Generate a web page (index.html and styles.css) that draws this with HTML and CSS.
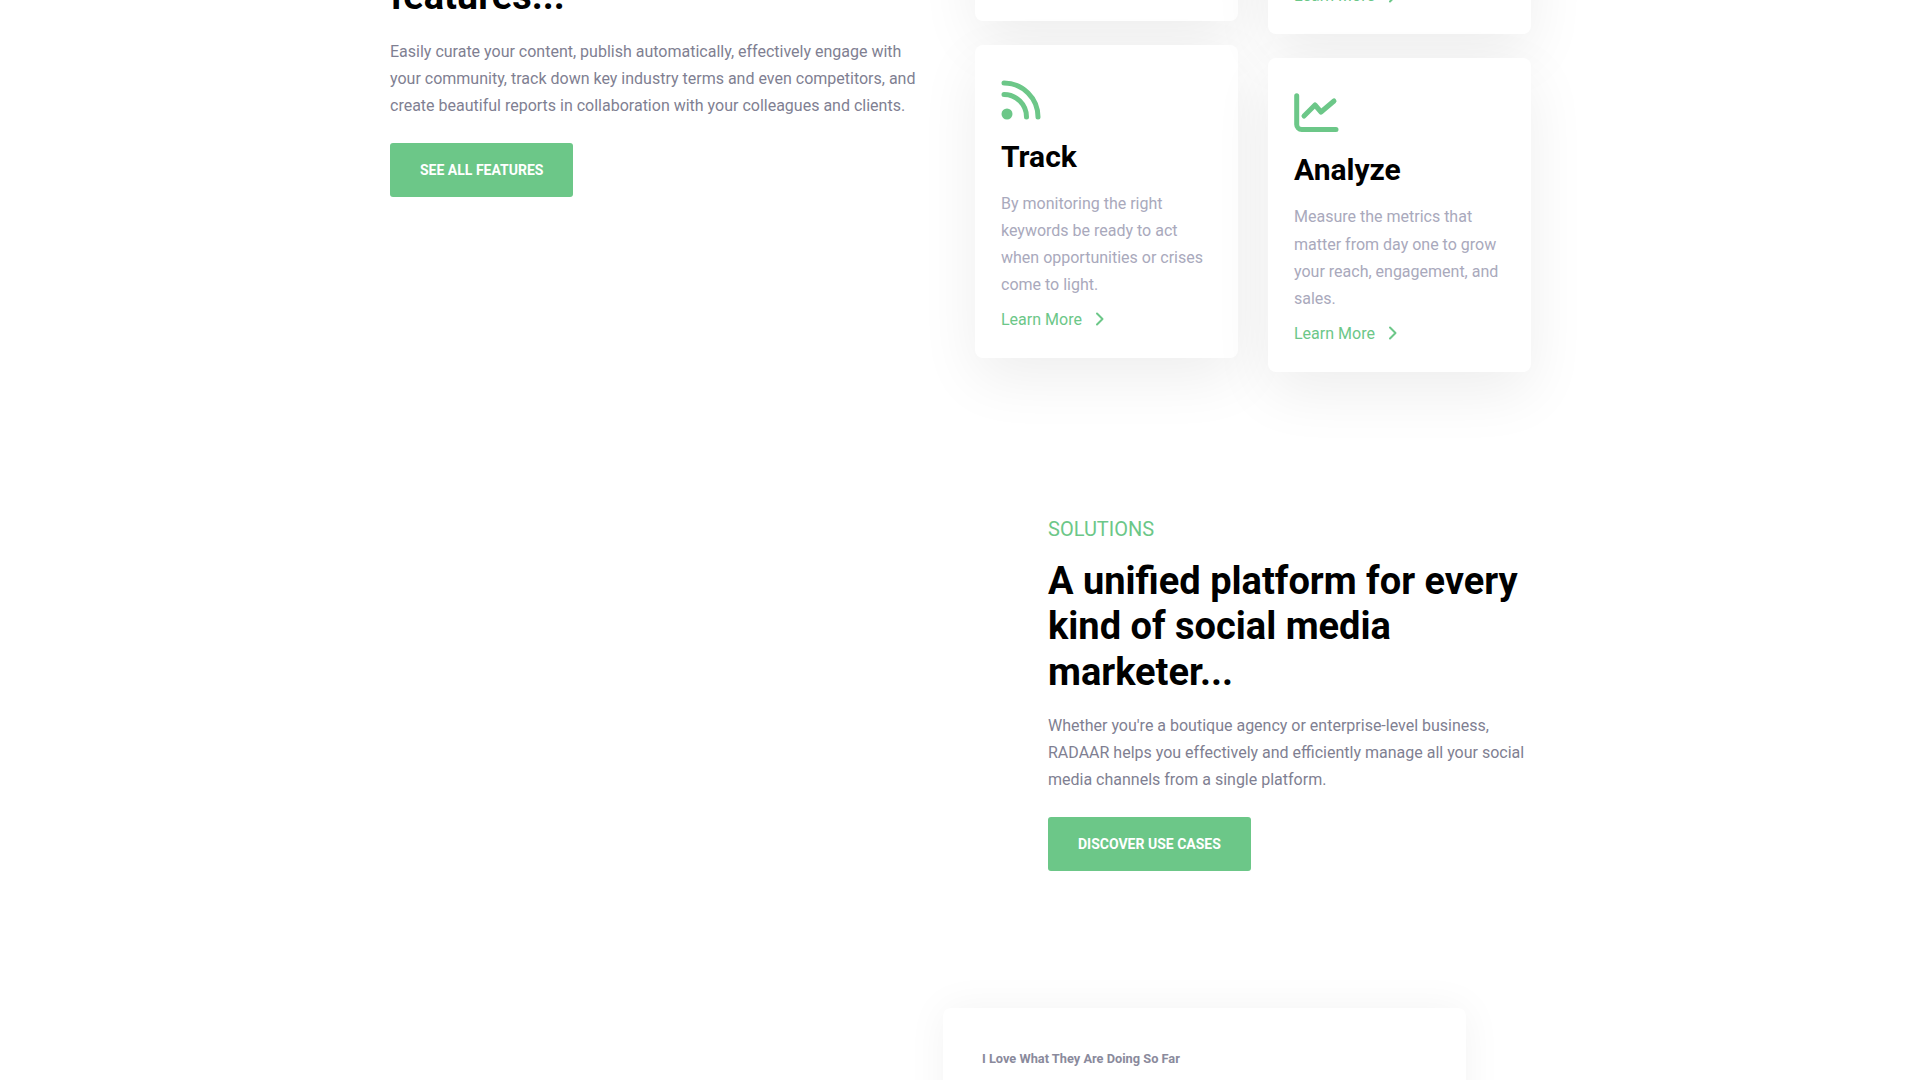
FILE: index.html
```html
<!DOCTYPE html>
<html lang="en">
<head>
    <meta charset="UTF-8">
    <meta name="viewport" content="width=device-width, initial-scale=1.0">
    <title>RADAAR</title>
    <link rel="stylesheet" href="styles.css">
</head>
<body>
    <div class="page">
        <section class="features">
            <div class="features-text">
                <h2>features...</h2>
                <p class="lead">Easily curate your content, publish automatically, effectively engage with your community, track down key industry terms and even competitors, and create beautiful reports in collaboration with your colleagues and clients.</p>
                <a class="btn" href="#">SEE ALL FEATURES</a>
            </div>
            <div class="card-col">
                <div class="card card-top card-top-short"></div>
                <div class="card">
                    <svg class="icon" width="40" height="40" viewBox="0 0 40 40" fill="none" stroke="#6cc788" stroke-width="5" stroke-linecap="round">
                        <path d="M3 3A34 34 0 0 1 37 37"/>
                        <path d="M3 14.5A22.5 22.5 0 0 1 25.5 37"/>
                        <circle cx="6" cy="34" r="5.5" fill="#6cc788" stroke="none"/>
                    </svg>
                    <h3>Track</h3>
                    <p>By monitoring the right keywords be ready to act when opportunities or crises come to light.</p>
                    <a class="more" href="#">Learn More
                        <svg width="10" height="14" viewBox="0 0 10 14" fill="none" stroke="#6cc788" stroke-width="2" stroke-linecap="round" stroke-linejoin="round"><path d="M2 1.5L7.5 7L2 12.5"/></svg>
                    </a>
                </div>
            </div>
            <div class="card-col">
                <div class="card card-top">
                    <a class="more" href="#">Learn More
                        <svg width="10" height="14" viewBox="0 0 10 14" fill="none" stroke="#6cc788" stroke-width="2" stroke-linecap="round" stroke-linejoin="round"><path d="M2 1.5L7.5 7L2 12.5"/></svg>
                    </a>
                </div>
                <div class="card">
                    <svg class="icon" width="46" height="40" viewBox="0 0 46 40" fill="none" stroke="#6cc788" stroke-width="5" stroke-linecap="round" stroke-linejoin="round">
                        <path d="M2.7 2.7V31.5a5 5 0 0 0 5 5H42"/>
                        <path d="M10 23L21 12L27 19L40 8"/>
                    </svg>
                    <h3>Analyze</h3>
                    <p>Measure the metrics that matter from day one to grow your reach, engagement, and sales.</p>
                    <a class="more" href="#">Learn More
                        <svg width="10" height="14" viewBox="0 0 10 14" fill="none" stroke="#6cc788" stroke-width="2" stroke-linecap="round" stroke-linejoin="round"><path d="M2 1.5L7.5 7L2 12.5"/></svg>
                    </a>
                </div>
            </div>
        </section>

        <section class="solutions">
            <span class="eyebrow">SOLUTIONS</span>
            <h2>A unified platform for every kind of social media marketer...</h2>
            <p class="lead">Whether you're a boutique agency or enterprise-level business, RADAAR helps you effectively and efficiently manage all your social media channels from a single platform.</p>
            <a class="btn" href="#">DISCOVER USE CASES</a>
        </section>

        <section class="testimonial">
            <h4>I Love What They Are Doing So Far</h4>
        </section>
    </div>
</body>
</html>
```

FILE: styles.css
```css
html, body {
    margin: 0;
    padding: 0;
    height: 1080px;
    overflow: hidden;
    background-color: #fff;
}

body {
    font-family: Roboto, "Liberation Sans", sans-serif;
    font-size: 16px;
    color: #7f7f92;
}

a {
    text-decoration: none;
}

h2 {
    margin: 0;
    color: #000;
    font-size: 38px;
    font-weight: 700;
    line-height: 1.2;
}

/* the shot is scrolled, so the top of the first section sits above the fold */
.page {
    width: 1140px;
    margin: -200px auto 0;
}

.lead {
    margin: 0;
    line-height: 27px;
}

.btn {
    display: inline-block;
    padding: 0 30px;
    background-color: #6cc788;
    color: #fff;
    border-radius: 3px;
    font-size: 14px;
    font-weight: 700;
    line-height: 54px;
}

.features {
    display: flex;
    align-items: flex-start;
}

.features-text {
    flex-shrink: 0;
    width: 535px;
    margin-top: 174px;
    margin-right: 50px;
}

.features-text .lead {
    margin-top: 18px;
    margin-bottom: 24px;
}

.card-col {
    display: flex;
    flex-direction: column;
    gap: 24px;
    width: 263px;
    flex-shrink: 0;
    margin-right: 30px;
}

.card-col:last-child {
    margin-right: 0;
}

.card {
    box-sizing: border-box;
    padding: 35px 26px 25px;
    background-color: #fff;
    border-radius: 8px;
    box-shadow: 0 20px 60px rgba(0, 0, 0, 0.07);
}

.card-top {
    height: 234.4px;
    display: flex;
    align-items: flex-end;
}

.card-top-short {
    height: 220.6px;
}

.icon {
    display: block;
}

.card h3 {
    margin: 19px 0 15px;
    color: #000;
    font-size: 30px;
    font-weight: 700;
    line-height: 36px;
}

.card p {
    margin: 0 0 7.6px;
    color: #a9a9bc;
    line-height: 1.7;
}

.more {
    display: flex;
    align-items: center;
    gap: 13px;
    color: #6cc788;
    line-height: 27px;
}

.solutions {
    width: 482px;
    margin-left: 658px;
    margin-top: 143px;
}

.eyebrow {
    display: block;
    color: #6cc788;
    font-size: 20px;
    line-height: 28px;
}

.solutions h2 {
    margin-top: 16px;
}

.solutions .lead {
    margin-top: 16px;
    margin-bottom: 24px;
}

.testimonial {
    box-sizing: border-box;
    width: 523px;
    height: 300px;
    margin-left: 553px;
    margin-top: 137px;
    padding: 41px 39px;
    background-color: #fff;
    border-radius: 8px;
    box-shadow: 0 0 40px rgba(0, 0, 0, 0.05);
}

.testimonial h4 {
    margin: 0;
    color: #8a8a9c;
    font-size: 12.8px;
    font-weight: 700;
    line-height: 20px;
}
```
